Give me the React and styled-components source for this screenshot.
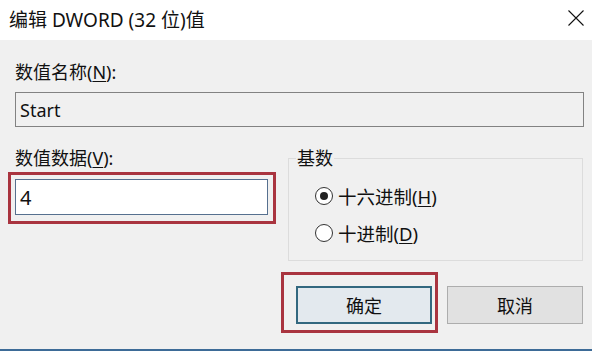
import React from "react";
import styled, { createGlobalStyle } from "styled-components";

const GlobalStyle = createGlobalStyle`
  html, body {
    margin: 0;
    padding: 0;
    background: #f0f0f0;
  }
  body {
    font-family: "Noto Sans", "Noto Sans CJK SC", sans-serif;
    color: #111;
  }
`;

const Dialog = styled.div`
  width: 592px;
  height: 351px;
  box-sizing: border-box;
  display: flex;
  flex-direction: column;
  background: #f0f0f0;
  border-bottom: 2px solid #3d6b97;
  overflow: hidden;
`;

const TitleBar = styled.div`
  height: 40px;
  flex-shrink: 0;
  background: #fff;
  display: flex;
  align-items: center;
  justify-content: space-between;
  padding: 0 9px 0 9px;
  font-size: 19px;
  line-height: 24px;
`;

const CloseButton = styled.div`
  width: 16px;
  height: 16px;
  display: flex;
  margin-top: -4px;
  margin-right: -1px;
`;

const Body = styled.div`
  padding: 21px 8px 0 15px;
  display: flex;
  flex-direction: column;
`;

const Label = styled.div`
  font-size: 18px;
  line-height: 22px;
  height: 22px;
  u {
    text-decoration-thickness: 1px;
    text-underline-offset: 2px;
  }
`;

const Field = styled.div`
  box-sizing: border-box;
  height: ${(p) => p.$height}px;
  margin-top: ${(p) => p.$top || 0}px;
  border: 1px solid ${(p) => (p.$focus ? "#56708f" : "#828282")};
  background: ${(p) => (p.$readOnly ? "#f0f0f0" : "#fff")};
  display: flex;
  align-items: center;
  padding-left: 4px;
  font-size: ${(p) => p.$size || 18}px;
`;

const Row = styled.div`
  display: flex;
  align-items: flex-start;
  gap: 20px;
  margin-top: 20px;
`;

const Column = styled.div`
  width: 253px;
  display: flex;
  flex-direction: column;
`;

const Highlight = styled.div`
  border: 3px solid #a9343f;
  padding: ${(p) => p.$pad};
  margin: ${(p) => p.$margin};
  flex-shrink: 0;
`;

const GroupBox = styled.fieldset`
  flex: 1;
  margin: 0 1px 0 0;
  padding: 0 0 16px 26px;
  border: 1px solid #dcdcdc;
  min-width: 0;
`;

const Legend = styled.legend`
  margin-left: -19px;
  padding: 0 1px;
  font-size: 18px;
  line-height: 22px;
`;

const RadioRow = styled.div`
  display: flex;
  align-items: center;
  height: 22px;
  margin-top: ${(p) => p.$top}px;
  font-size: 18.5px;
  gap: 5px;
  u {
    text-decoration-thickness: 1px;
    text-underline-offset: 2px;
  }
`;

const RadioCircle = styled.span`
  width: 18px;
  height: 18px;
  box-sizing: border-box;
  border-radius: 50%;
  border: 1px solid #333;
  background: #fff;
  display: flex;
  align-items: center;
  justify-content: center;
  &::after {
    content: "";
    width: 8px;
    height: 8px;
    border-radius: 50%;
    background: ${(p) => (p.$checked ? "#222" : "transparent")};
  }
`;

const ButtonRow = styled.div`
  display: flex;
  justify-content: flex-end;
  align-items: flex-start;
  margin-top: 11px;
  gap: 9px;
`;

const Button = styled.div`
  width: 136px;
  height: 38px;
  box-sizing: border-box;
  display: flex;
  align-items: center;
  justify-content: center;
  font-size: 18px;
  background: ${(p) => (p.$primary ? "#e3e9ee" : "#e1e1e1")};
  border: ${(p) => (p.$primary ? "2px solid #33687f" : "1px solid #adadad")};
  margin-top: ${(p) => p.$top || 0}px;
  margin-right: ${(p) => p.$right || 0}px;
`;

const Radio = ({ checked, top, children }) => (
  <RadioRow $top={top}>
    <RadioCircle $checked={checked} />
    <span>{children}</span>
  </RadioRow>
);

export default function App() {
  return (
    <>
      <GlobalStyle />
      <Dialog>
        <TitleBar>
          <span>编辑 DWORD (32 位)值</span>
          <CloseButton>
            <svg width="16" height="16" viewBox="0 0 16 16">
              <path d="M0.5 0.5 L15.5 15.5 M15.5 0.5 L0.5 15.5" stroke="#111" strokeWidth="1.1" fill="none" />
            </svg>
          </CloseButton>
        </TitleBar>
        <Body>
          <Label>
            数值名称(<u>N</u>):
          </Label>
          <Field $height={35} $top={9} $readOnly>
            Start
          </Field>
          <Row>
            <Column>
              <Label>
                数值数据(<u>V</u>):
              </Label>
              <Highlight $pad="4px 5px 6px 4px" $margin="3px -8px 0 -7px">
                <Field $height={36} $size={20} $focus>
                  4
                </Field>
              </Highlight>
            </Column>
            <GroupBox>
              <Legend>基数</Legend>
              <Radio checked top={16}>
                十六进制(<u>H</u>)
              </Radio>
              <Radio top={15}>
                十进制(<u>D</u>)
              </Radio>
            </GroupBox>
          </Row>
          <ButtonRow>
            <Highlight $pad="11px 3px 6px 12px" $margin="0">
              <Button $primary>确定</Button>
            </Highlight>
            <Button $top={14} $right={1}>
              取消
            </Button>
          </ButtonRow>
        </Body>
      </Dialog>
    </>
  );
}
